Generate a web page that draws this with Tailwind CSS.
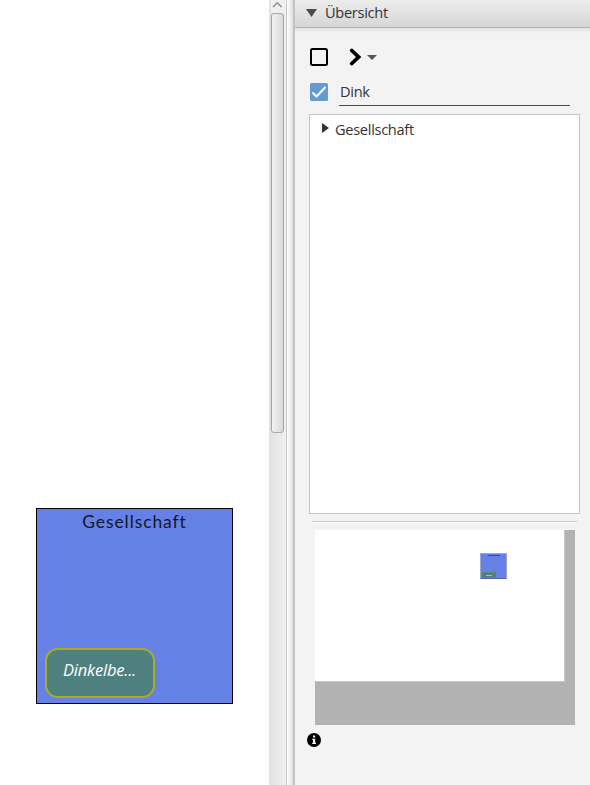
<!DOCTYPE html>
<html lang="de">
<head>
<meta charset="utf-8">
<title>Übersicht</title>
<script src="https://cdn.jsdelivr.net/npm/@tailwindcss/browser@4"></script>
</head>
<body class="flex h-[785px] w-[590px] overflow-hidden bg-white font-['Open_Sans',sans-serif] text-[14.6px] text-[#333]">
  <!-- Canvas -->
  <main class="relative w-[269px] shrink-0 bg-white">
    <div class="absolute left-[36px] top-[508px] h-[196px] w-[197px] border border-black bg-[#6681e5]">
      <div class="mt-[2px] text-center font-['Lato',sans-serif] text-[17.5px] leading-[22px] tracking-[0.9px] text-[#111827]">Gesellschaft</div>
      <div class="absolute left-[7.500px] top-[138.500px] flex h-[50px] w-[110px] items-center justify-center rounded-[13px] border-2 border-[#acac24] bg-[#4e8080] pb-[5px] text-[16.5px] italic text-white"><span class="tracking-[-0.2px]">Dinkelbe...</span></div>
    </div>
  </main>
  <!-- Scrollbar -->
  <div class="flex w-[17px] shrink-0 flex-col border-l border-[#e2e2e2] bg-linear-to-r from-[#e2e2e2] to-[#f0f0f0] pl-px">
    <div class="h-[13px] shrink-0 bg-[#f0f0f0]"><svg class="h-[13px] w-[13px]" viewBox="0 0 13 13" fill="none" stroke="#888" stroke-width="1.3"><path d="M2 7l4.300-4.300L10.600 7"/></svg></div>
    <div class="h-[420px] w-[13px] rounded-[3px] border border-[#a5a5a5] bg-linear-to-r from-[#f3f3f3] to-[#d9d9d9]"></div>
  </div>
  <!-- Splitter -->
  <div class="w-[9px] shrink-0 border-l border-r-2 border-l-[#c6c6c6] border-r-[#c3c3c3] bg-linear-to-r from-white to-[#dedede]"></div>
  <!-- Overview panel -->
  <aside class="flex w-[295px] shrink-0 flex-col bg-[#f3f3f3]">
    <header class="flex h-[28px] shrink-0 items-center border-b border-[#b4b4b4] bg-linear-to-b from-[#ededed] to-[#d6d6d6] pb-[2px] pl-[11px]">
      <svg class="h-[8px] w-[11px]" viewBox="0 0 11 8"><path d="M0 0h11L5.500 8z" fill="#4d4d4d"/></svg>
      <span class="ml-[8px] tracking-[-0.3px]">Übersicht</span>
    </header>
    <div class="h-[5px] shrink-0 bg-linear-to-b from-[#e3e3e3] to-[#f3f3f3]"></div>
    <div class="flex h-[48px] shrink-0 items-center pl-[15px]">
      <svg class="h-[18px] w-[18px]" viewBox="0 0 18 18"><rect x="1" y="1" width="16" height="16" rx="1.500" fill="none" stroke="#000" stroke-width="2"/></svg>
      <svg class="ml-[21px] h-[18px] w-[13px]" viewBox="0 0 13 18"><path d="M2.800 2.500L9.600 9l-6.800 6.500" fill="none" stroke="#000" stroke-width="3.800" stroke-linecap="round"/></svg>
      <svg class="ml-[5px] h-[5px] w-[10px]" viewBox="0 0 10 5"><path d="M0 0h10L5 5z" fill="#555"/></svg>
    </div>
    <div class="flex h-[25px] shrink-0 pl-[15px]">
      <svg class="mt-[2px] h-[18px] w-[18px]" viewBox="0 0 18 18"><rect width="18" height="18" rx="1.500" fill="#659bd1"/><path d="M2.500 9.500l4 4L15.500 4" fill="none" stroke="#fff" stroke-width="2"/></svg>
      <div class="ml-[11px] w-[231px] border-b border-[#4a4a4a] pl-px leading-[21px] tracking-[-0.3px]">Dink</div>
    </div>
    <div class="ml-[14px] mt-[8px] h-[400px] w-[271px] shrink-0 border border-[#c4c4c4] bg-white pl-[12px] pt-[3px]">
      <div class="flex h-[23px] items-center"><svg class="mt-[-4px] h-[10px] w-[7px]" viewBox="0 0 7 10"><path d="M0 0l7 5-7 5z" fill="#333"/></svg><span class="ml-[6px] tracking-[-0.3px]">Gesellschaft</span></div>
    </div>
    <div class="ml-[17px] mt-[7px] h-[2px] w-[265px] shrink-0 border-t border-b border-t-[#cacaca] border-b-white"></div>
    <!-- Minimap -->
    <div class="ml-[20px] mt-[7px] h-[195px] w-[260px] shrink-0 bg-[#b2b2b2]">
      <div class="relative h-[151px] w-[249px] bg-white shadow-[1px_1px_0_#c8c8c8]">
        <div class="absolute left-[165px] top-[23px] h-[26px] w-[27px] border border-[#9ba7cf] border-b-[#5668b0] bg-[#6681e5]">
          <div class="mx-auto mt-px h-px w-[12px] bg-[#3a4a90]"></div>
          <div class="absolute left-[1px] top-[18px] flex h-[6px] w-[14px] items-center justify-center border border-[#5e857a] bg-[#4e8080]"><div class="h-px w-[6px] bg-[#a5bebe]"></div></div>
        </div>
      </div>
    </div>
    <svg class="ml-[12px] mt-[8px] h-[14px] w-[14px] shrink-0" viewBox="0 0 14 14"><circle cx="7" cy="7" r="7" fill="#000"/><path d="M6 2.600h2.200v2H6zM5.300 5.700h2.900v4h.8V11H5.200V9.700H6V7h-.7z" fill="#f3f3f3"/></svg>
  </aside>
</body>
</html>
